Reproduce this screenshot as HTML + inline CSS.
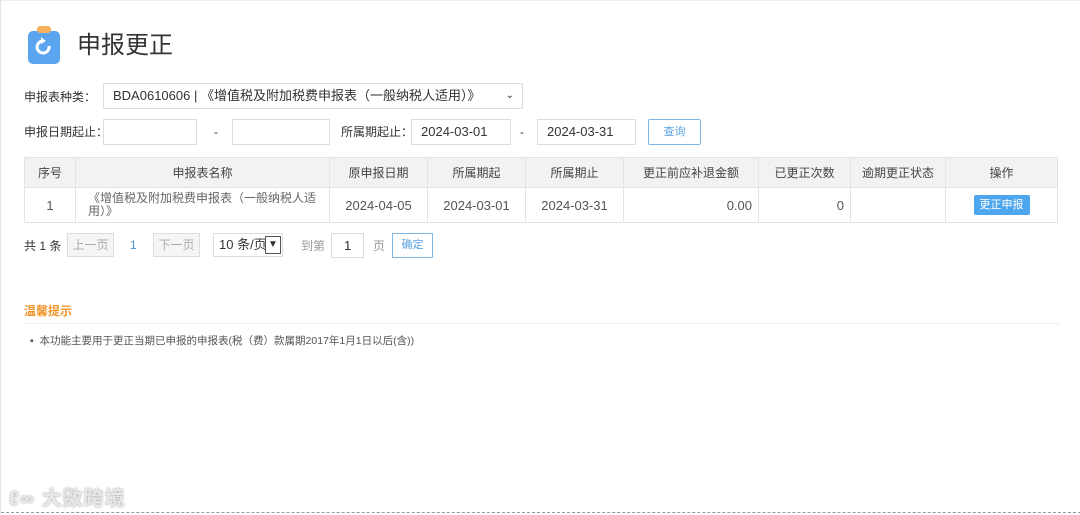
<!DOCTYPE html>
<html><head><meta charset="utf-8"><style>
*{margin:0;padding:0;box-sizing:border-box}
body{width:1080px;height:514px;background:#fff;font-family:"Liberation Sans","Noto Sans CJK SC",sans-serif;font-size:12px;color:#333;position:relative;overflow:hidden;border-left:1px solid #e6e6e6;border-top:1px solid #eee}
.a{position:absolute}
.box{position:absolute;border:1px solid #ddd;background:#fff;height:26px;line-height:24px;padding-left:9px;font-size:13px;color:#333}
.lbl{position:absolute;font-size:12px;color:#333;line-height:14px}
table{position:absolute;left:23px;top:156px;border-collapse:collapse;font-size:12px}
td,th{border:1px solid #e3e3e3;text-align:center;font-weight:normal;color:#444}
th{background:#f2f2f2;height:30px}
td{height:35px;font-size:13px;color:#555}
.pb{position:absolute;height:24px;line-height:22px;border:1px solid #ddd;background:#f5f5f5;color:#aaa;text-align:center;font-size:12px}
</style></head><body>
<svg class="a" style="left:26px;top:24px" width="34" height="40" viewBox="0 0 34 40">
<rect x="1" y="6" width="32" height="33" rx="5" fill="#5aa4f0"/>
<rect x="10" y="1" width="14" height="7" rx="3" fill="#f6b25c"/>
<path d="M22 21 A6 6 0 1 1 16 16" stroke="#fff" stroke-width="3" fill="none"/>
<path d="M14 12 L19 16 L14 19 Z" fill="#fff"/>
</svg>
<div class="a" style="left:76px;top:31px;font-size:24px;color:#333;line-height:28px">申报更正</div>

<div class="lbl" style="left:23px;top:89px">申报表种类：</div>
<div class="box" style="left:102px;top:82px;width:420px">BDA0610606 | 《增值税及附加税费申报表（一般纳税人适用）》<span style="position:absolute;right:8px;top:0;font-size:10px">&#8964;</span></div>

<div class="lbl" style="left:23px;top:124px">申报日期起止：</div>
<div class="box" style="left:102px;top:118px;width:94px"></div>
<div class="lbl" style="left:213px;top:124px">-</div>
<div class="box" style="left:231px;top:118px;width:98px"></div>
<div class="lbl" style="left:340px;top:124px">所属期起止：</div>
<div class="box" style="left:410px;top:118px;width:100px">2024-03-01</div>
<div class="lbl" style="left:519px;top:124px">-</div>
<div class="box" style="left:536px;top:118px;width:99px">2024-03-31</div>
<div class="a" style="left:647px;top:118px;width:53px;height:26px;border:1px solid #7fb8e6;border-radius:2px;color:#5aa4e0;text-align:center;line-height:24px;font-size:11px">查询</div>

<table>
<tr><th style="width:51px">序号</th><th style="width:254px">申报表名称</th><th style="width:98px">原申报日期</th><th style="width:98px">所属期起</th><th style="width:98px">所属期止</th><th style="width:135px">更正前应补退金额</th><th style="width:92px">已更正次数</th><th style="width:95px">逾期更正状态</th><th style="width:112px">操作</th></tr>
<tr><td>1</td><td style="text-align:left;padding-left:12px;font-size:12px;line-height:13px;color:#666">《增值税及附加税费申报表（一般纳税人适<br>用）》</td><td>2024-04-05</td><td>2024-03-01</td><td>2024-03-31</td><td style="text-align:right;padding-right:6px">0.00</td><td style="text-align:right;padding-right:6px">0</td><td></td><td><span style="display:inline-block;background:#4ea7ee;color:#fff;font-size:11px;width:56px;height:20px;line-height:20px;border-radius:2px">更正申报</span></td></tr>
</table>

<div class="lbl" style="left:23px;top:238px;font-size:12px">共 1 条</div>
<div class="pb" style="left:66px;top:232px;width:47px">上一页</div>
<div class="a" style="left:129px;top:237px;color:#4a90d9;font-size:12px">1</div>
<div class="pb" style="left:152px;top:232px;width:47px">下一页</div>
<div class="a" style="left:212px;top:232px;width:70px;height:24px;border:1px solid #ddd;font-size:13px;line-height:22px;padding-left:5px">10 条/页<span style="position:absolute;right:1px;top:2px;width:16px;height:18px;border:1px solid #555;font-size:10px;line-height:16px;text-align:center">&#9660;</span></div>
<div class="lbl" style="left:300px;top:238px;color:#999">到第</div>
<div class="box" style="left:330px;top:232px;width:33px;height:25px;padding-left:12px">1</div>
<div class="lbl" style="left:372px;top:238px;color:#999">页</div>
<div class="a" style="left:391px;top:232px;width:41px;height:25px;border:1px solid #7fb8e6;color:#5aa4e0;font-size:11px;text-align:center;line-height:23px">确定</div>

<div class="a" style="left:23px;top:301px;color:#f0952a;font-size:12px;font-weight:bold">温馨提示</div>
<div class="a" style="left:23px;top:322px;width:1035px;height:1px;background:#eee"></div>
<div class="a" style="left:29px;top:332px;font-size:10.5px;color:#555">▪&nbsp; 本功能主要用于更正当期已申报的申报表(税（费）款属期2017年1月1日以后(含))</div>

<div class="a" style="left:8px;top:481px;font-size:20px;color:#e8e8e8;font-weight:bold;text-shadow:0 0 2px #999;letter-spacing:1px">ℓ∞ 大数跨境</div>
<div class="a" style="left:0;top:511px;width:1080px;height:3px;border-top:1px dashed #999"></div>
</body></html>
